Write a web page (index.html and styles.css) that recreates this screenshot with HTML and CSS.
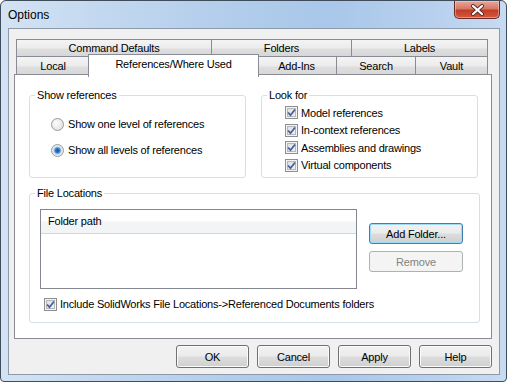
FILE: index.html
```html
<!DOCTYPE html>
<html lang="en">
<head>
    <meta charset="UTF-8">
    <title>Options</title>
    <link rel="stylesheet" href="styles.css">
</head>
<body>
<div class="window">
    <div class="titlebar">
        <span class="title">Options</span>
        <div class="close">
            <svg width="15" height="12" viewBox="0 0 15 12">
                <path d="M3 2 L12 10 M12 2 L3 10" stroke="#5a2a24" stroke-width="4" stroke-linecap="round"/>
                <path d="M3 2 L12 10 M12 2 L3 10" stroke="#ffffff" stroke-width="2.2" stroke-linecap="round"/>
            </svg>
        </div>
    </div>

    <div class="client">
        <div class="tabrow tabrow-top">
            <div class="tab">Command Defaults</div>
            <div class="tab">Folders</div>
            <div class="tab">Labels</div>
        </div>
        <div class="tabrow tabrow-bottom">
            <div class="tab">Local</div>
            <div class="tab selected">References/Where Used</div>
            <div class="tab">Add-Ins</div>
            <div class="tab">Search</div>
            <div class="tab">Vault</div>
        </div>

        <div class="page">
            <div class="top-groups">
                <div class="group group-refs">
                    <span class="legend">Show references</span>
                    <div class="radios">
                        <div class="option"><span class="radio"></span>Show one level of references</div>
                        <div class="option"><span class="radio checked"></span>Show all levels of references</div>
                    </div>
                </div>
                <div class="group group-look">
                    <span class="legend">Look for</span>
                    <div class="checks">
                        <div class="option"><span class="check"><svg width="9" height="9" viewBox="0 0 9 9"><path d="M1 4.5 L3.5 7.2 L8 1.5" fill="none" stroke="#4a5f97" stroke-width="1.8"/></svg></span>Model references</div>
                        <div class="option"><span class="check"><svg width="9" height="9" viewBox="0 0 9 9"><path d="M1 4.5 L3.5 7.2 L8 1.5" fill="none" stroke="#4a5f97" stroke-width="1.8"/></svg></span>In-context references</div>
                        <div class="option"><span class="check"><svg width="9" height="9" viewBox="0 0 9 9"><path d="M1 4.5 L3.5 7.2 L8 1.5" fill="none" stroke="#4a5f97" stroke-width="1.8"/></svg></span>Assemblies and drawings</div>
                        <div class="option"><span class="check"><svg width="9" height="9" viewBox="0 0 9 9"><path d="M1 4.5 L3.5 7.2 L8 1.5" fill="none" stroke="#4a5f97" stroke-width="1.8"/></svg></span>Virtual components</div>
                    </div>
                </div>
            </div>

            <div class="group group-files">
                <span class="legend">File Locations</span>
                <div class="files">
                    <div class="list">
                        <div class="list-header">Folder path</div>
                    </div>
                    <div class="side-buttons">
                        <div class="button default">Add Folder...</div>
                        <div class="button disabled">Remove</div>
                    </div>
                </div>
                <div class="option include"><span class="check"><svg width="9" height="9" viewBox="0 0 9 9"><path d="M1 4.5 L3.5 7.2 L8 1.5" fill="none" stroke="#4a5f97" stroke-width="1.8"/></svg></span>Include SolidWorks File Locations-&gt;Referenced Documents folders</div>
            </div>
        </div>

        <div class="dialog-buttons">
            <div class="button">OK</div>
            <div class="button">Cancel</div>
            <div class="button">Apply</div>
            <div class="button">Help</div>
        </div>
    </div>
</div>
</body>
</html>
```

FILE: styles.css
```css
* {
    box-sizing: border-box;
}
body {
    margin: 0;
    font-family: "Liberation Sans", Arial, sans-serif;
    font-size: 11px;
    letter-spacing: -0.2px;
    color: #000;
}
.window {
    width: 507px;
    height: 382px;
    border: 1px solid #3f4c5c;
    border-radius: 6px 6px 4px 4px;
    background: linear-gradient(to right, #d3e3f4 0%, #c4d9f0 18%, #b5cfec 40%, #a9c7ea 65%, #b7d0ee 85%, #c7dbf1 100%);
    display: flex;
    flex-direction: column;
    overflow: hidden;
}
.titlebar {
    height: 27px;
    display: flex;
    justify-content: space-between;
    align-items: flex-start;
    padding-left: 7px;
}
.title {
    font-size: 12px;
    letter-spacing: 0;
    line-height: 28px;
}
.close {
    width: 46px;
    height: 18px;
    margin-right: 6px;
    border: 1px solid #6a2b25;
    border-top: none;
    border-radius: 0 0 5px 5px;
    background: linear-gradient(#e9a89b 0%, #d77866 45%, #c33c26 55%, #d25a40 100%);
    box-shadow: inset 0 0 0 1px rgba(255, 220, 210, 0.45);
    display: flex;
    align-items: center;
    justify-content: center;
}
.client {
    flex: 1;
    margin: 0 6px 6px 7px;
    border: 1px solid #8d99a6;
    background: #f0f0f0;
    padding: 10px 7px 0 5px;
    display: flex;
    flex-direction: column;
}
.tabrow {
    display: grid;
    padding: 0 3px 0 2px;
}
.tabrow-top {
    grid-template-columns: 196px 140px 136px;
    height: 17px;
}
.tabrow-bottom {
    grid-template-columns: 74px 167px 80px 79px 72px;
    height: 18px;
}
.tab {
    border: 1px solid #898c95;
    border-bottom: none;
    margin-left: -1px;
    background: linear-gradient(#f4f4f4 0%, #ececec 45%, #dedede 55%, #d6d6d6 100%);
    text-align: center;
    line-height: 17px;
}
.tab:first-child {
    margin-left: 0;
}
.tabrow-bottom .tab {
    line-height: 19px;
}
.tab.selected {
    position: relative;
    z-index: 1;
    margin: -2px -2px -1px -2px;
    background: #fff;
    line-height: 18px;
}
.page {
    height: 265px;
    border: 1px solid #898c95;
    background: #fff;
    padding: 0 11px 0 14px;
}
.top-groups {
    display: grid;
    grid-template-columns: 217px 217px;
    column-gap: 15px;
    margin-top: 20px;
}
.group {
    border: 1px solid #d5dfe5;
    border-radius: 3px;
}
.legend {
    display: block;
    width: fit-content;
    margin: -8px 0 0 5px;
    padding: 0 2px;
    line-height: 14px;
    background: #fff;
}
.group-refs,
.group-look {
    height: 83px;
}
.option {
    display: flex;
    align-items: center;
    white-space: nowrap;
}
.radios {
    display: flex;
    flex-direction: column;
    gap: 10px;
    padding: 14px 0 0 21px;
}
.radios .option {
    height: 16px;
}
.radio {
    width: 13px;
    height: 13px;
    margin-right: 4px;
    border: 1px solid #979aa0;
    border-radius: 50%;
    background: radial-gradient(circle at 40% 40%, #fdfdfd 0%, #e8e8e8 60%, #d4d4d4 100%);
}
.radio.checked {
    background: radial-gradient(circle, #1d4e8a 0px, #2f78c6 2px, #79b3e6 3.2px, #cfe1f1 4px, #e9e9e9 4.6px, #f6f6f6 100%);
}
.checks {
    padding: 2px 0 0 23px;
}
.checks .option {
    height: 17.5px;
}
.check {
    width: 13px;
    height: 13px;
    margin-right: 3px;
    border: 1px solid #8e8f8f;
    background: linear-gradient(135deg, #d9dbe0 0%, #f5f6f8 100%);
    box-shadow: inset 0 0 0 1px #f4f4f4, inset 0 0 0 2px #b4b8be;
    display: flex;
    align-items: center;
    justify-content: center;
}
.group-files {
    height: 130px;
    margin-top: 15px;
    padding: 0 0 0 10px;
}
.group-files .legend {
    margin-left: -5px;
}
.files {
    display: flex;
    margin-top: 9px;
}
.list {
    width: 317px;
    height: 80px;
    border: 1px solid #828790;
}
.list-header {
    height: 24px;
    line-height: 23px;
    padding-left: 7px;
    border-bottom: 1px solid #d5d5d5;
    background: linear-gradient(#ffffff 0%, #ffffff 45%, #f3f4f6 55%, #f3f4f6 100%);
}
.side-buttons {
    display: flex;
    flex-direction: column;
    gap: 7px;
    margin: 14px 0 0 12px;
}
.button {
    width: 73px;
    height: 23px;
    border: 1px solid #707070;
    border-radius: 3px;
    background: linear-gradient(#f2f2f2 0%, #ebebeb 48%, #dddddd 52%, #cfcfcf 100%);
    box-shadow: inset 0 0 0 1px #fbfbfb;
    display: flex;
    align-items: center;
    justify-content: center;
}
.side-buttons .button {
    width: 94px;
    height: 21px;
}
.button.default {
    border-color: #3c7fb1;
    box-shadow: inset 0 0 0 1px #9fdcf7;
}
.button.disabled {
    border-color: #adb2b5;
    background: #f4f4f4;
    box-shadow: none;
    color: #838383;
}
.include {
    height: 16px;
    margin: 7px 0 0 4px;
}
.dialog-buttons {
    display: flex;
    justify-content: flex-end;
    gap: 8px;
    margin-top: 6px;
}
```
